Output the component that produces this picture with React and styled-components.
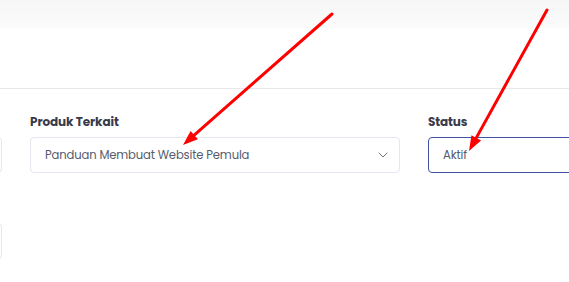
import React from 'react';
import styled, { createGlobalStyle } from 'styled-components';

const GlobalStyle = createGlobalStyle`
  html, body {
    margin: 0;
    padding: 0;
    background: #ffffff;
    overflow: hidden;
  }
  body {
    font-family: 'Poppins', 'Inter', 'Open Sans', sans-serif;
  }
`;

const Page = styled.div`
  position: relative;
  width: 569px;
  height: 282px;
  overflow: hidden;
  background: #ffffff;
`;

const TopBand = styled.div`
  height: 28px;
  background: linear-gradient(to bottom, #f6f6f6, #fbfbfb);
`;

const CardHeader = styled.div`
  height: 60px;
  border-bottom: 1px solid #e8e8ec;
`;

const FormBody = styled.div`
  padding-top: 24px;
  display: flex;
  flex-direction: column;
  gap: 26px;
`;

const FormRow = styled.div`
  display: grid;
  grid-template-columns: repeat(3, 370px);
  column-gap: 28px;
  margin-left: -368px;
`;

const Field = styled.div`
  display: flex;
  flex-direction: column;
`;

const Label = styled.label`
  font-size: 12px;
  line-height: 18px;
  font-weight: 700;
  color: #393a4a;
  letter-spacing: -0.1px;
  margin-bottom: 6px;
  min-height: 18px;
`;

const Control = styled.div`
  box-sizing: border-box;
  height: 36px;
  border: 1px solid ${p => (p.$focused ? '#4152a6' : '#e6e6ee')};
  border-radius: 4px;
  background: #ffffff;
  display: flex;
  align-items: center;
  justify-content: space-between;
  padding: 0 11px 0 14px;
  font-size: 11.6px;
  letter-spacing: -0.15px;
  color: #565b6c;
`;

const Chevron = () => (
  <svg width="10" height="6" viewBox="0 0 10 6" fill="none">
    <path d="M1 1l4 4 4-4" stroke="#6b6f7e" strokeWidth="1" strokeLinecap="round" strokeLinejoin="round" />
  </svg>
);

const ArrowLayer = styled.svg`
  position: absolute;
  top: 0;
  left: 0;
  pointer-events: none;
`;

const Arrow = ({ x1, y1, x2, y2 }) => {
  const dx = x2 - x1;
  const dy = y2 - y1;
  const len = Math.hypot(dx, dy);
  const ux = dx / len;
  const uy = dy / len;
  const head = 15;
  const half = 5.5;
  const bx = x2 - ux * head;
  const by = y2 - uy * head;
  const pts = [
    `${x2},${y2}`,
    `${bx - uy * half},${by + ux * half}`,
    `${bx + uy * half},${by - ux * half}`,
  ].join(' ');
  return (
    <g>
      <line x1={x1} y1={y1} x2={bx + ux * 2} y2={by + uy * 2} stroke="#ff0000" strokeWidth="3" strokeLinecap="round" />
      <polygon points={pts} fill="#ff0000" />
    </g>
  );
};

export default function App() {
  return (
    <>
      <GlobalStyle />
      <Page>
        <TopBand />
        <CardHeader />
        <FormBody>
          <FormRow>
            <Field>
              <Label />
              <Control />
            </Field>
            <Field>
              <Label>Produk Terkait</Label>
              <Control>
                <span>Panduan Membuat Website Pemula</span>
                <Chevron />
              </Control>
            </Field>
            <Field>
              <Label>Status</Label>
              <Control $focused>
                <span>Aktif</span>
              </Control>
            </Field>
          </FormRow>
          <FormRow>
            <Field>
              <Label />
              <Control />
            </Field>
          </FormRow>
        </FormBody>
        <ArrowLayer width="569" height="282">
          <Arrow x1={332} y1={14} x2={183} y2={145} />
          <Arrow x1={547} y1={10} x2={469} y2={151} />
        </ArrowLayer>
      </Page>
    </>
  );
}
